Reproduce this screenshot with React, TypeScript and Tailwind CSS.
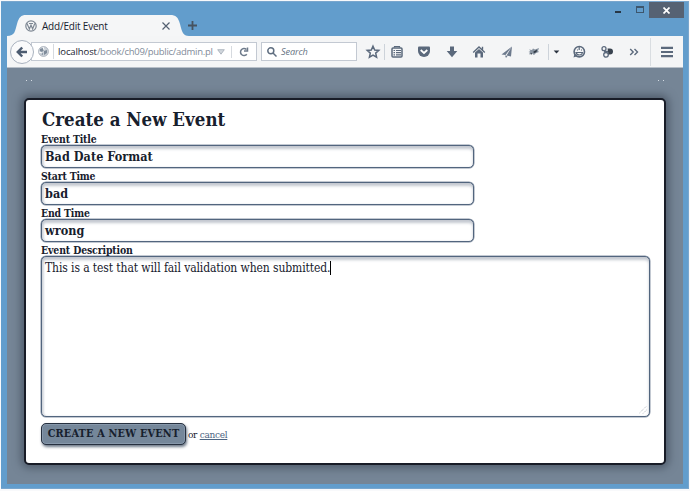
import React from "react";

const serif = "font-['DejaVu_Serif_Condensed','DejaVu_Serif',serif] [font-stretch:condensed]";
const inset = "rounded-[5px] border border-[#52657e] bg-white shadow-[inset_0_3px_3px_#c3c8d0,inset_2px_0_2px_#dde0e6,0_0_0_0.5px_#8794a5]";

function Glyph({ w, className = "", children }: { w: string; className?: string; children: React.ReactNode }) {
  return (
    <div className={`flex h-full shrink-0 items-center justify-center ${w} ${className}`}>
      <svg width="16" height="16" viewBox="0 0 16 16" fill="none" stroke="#5b697c" strokeWidth="1.6">
        {children}
      </svg>
    </div>
  );
}

function Divider() {
  return <div className="h-4 w-px shrink-0 bg-[#cdd3da]" />;
}

function Globe() {
  return (
    <svg width="11" height="11" viewBox="0 0 11 11" className="shrink-0">
      <circle cx="5.5" cy="5.5" r="5" fill="#cbd1d8" stroke="#a0a9b4" strokeWidth=".7" />
      <path d="M2 3l3-1 1 2-2 2-2-1zM6 5l3-1 0 3-3 2zM3 8l2-1 0 2z" fill="#7e8b9a" />
      <path d="M5 1l1 3M1 6l3 1" stroke="#fff" strokeWidth=".9" />
    </svg>
  );
}

function TabStrip() {
  return (
    <div className="flex h-[21px] items-end">
      <div className="relative h-[21px] w-[182px] shrink-0">
        <svg className="absolute inset-0" width="182" height="21" viewBox="0 0 182 21">
          <path d="M0 21C8 21 8 16 10 9C12 2 14 0 19 0H163C169 0 171 2 173 9C175 17 176 21 182 21Z" fill="#f5f6f7" />
        </svg>
        <div className="relative flex h-[21px] items-center pl-[18px]">
          <svg width="12" height="12" viewBox="0 0 12 12" fill="none" stroke="#7d8793">
            <circle cx="6" cy="6" r="5.2" strokeWidth="1.2" />
            <path d="M2 3.5L4.4 9L6 5L7.6 9L9.8 3.5M4 3.5h4" strokeWidth="1.2" />
          </svg>
          <span className="ml-[5px] w-[120px] font-['Open_Sans',sans-serif] text-[10px] leading-[20px] tracking-[-0.200px] text-[#18222f]">Add/Edit Event</span>
          <svg width="8" height="8" viewBox="0 0 8 8" stroke="#536071" strokeWidth="1.2"><path d="M.5.5l7 7M7.500.5l-7 7" /></svg>
        </div>
      </div>
      <svg className="-ml-px mb-[6px]" width="9" height="9" viewBox="0 0 9 9" stroke="#46535f" strokeWidth="1.800"><path d="M4.500 0v9M0 4.500h9" /></svg>
    </div>
  );
}

function Toolbar() {
  return (
    <div className="ml-[7px] flex h-[32px] w-[676px] items-center border-b border-[#b7bfc8] bg-[#f4f5f6]">
      <div className="z-10 ml-[3px] flex size-[24px] shrink-0 items-center justify-center rounded-full border border-[#a9b2bf] bg-[#fafafb]">
        <svg width="12" height="12" viewBox="0 0 12 12" fill="none" stroke="#4c5b70" strokeWidth="2.500"><path d="M11 6H2.500M6.200 1.500L1.800 6l4.400 4.500" /></svg>
      </div>
      <div className="-ml-[3px] flex h-[19px] w-[226px] shrink-0 items-center border border-[#c3c9d2] bg-white pl-[6px]">
        <Globe />
        <div className="ml-[4px] h-[15px] w-px shrink-0 bg-[#d6dadf]" />
        <span className="ml-[4px] w-[157px] shrink-0 whitespace-nowrap font-['Open_Sans',sans-serif] text-[9.500px] leading-[17px] tracking-[-0.280px] text-[#7f8b99]">
          <span className="tracking-[-0.100px] text-[#18222f]">localhost</span>/book/ch09/public/admin.pl
        </span>
        <svg className="ml-[2px] shrink-0" width="8" height="6" viewBox="0 0 8 6"><path d="M.7.700h6.600L4 5.200z" fill="#d2d7dd" stroke="#a2abb5" strokeWidth=".8" /></svg>
        <div className="ml-[6px] h-[12px] w-px shrink-0 bg-[#d6dadf]" />
        <svg className="ml-[7px] shrink-0" width="10" height="10" viewBox="0 0 10 10" fill="none" stroke="#6d7a8a" strokeWidth="1.500"><path d="M7.800 7.200A3.500 3.500 0 1 1 7.400 2.500M8.500.500v3.500H5" /></svg>
      </div>
      <div className="ml-[4px] flex h-[19px] w-[96px] shrink-0 items-center border border-[#c3c9d2] bg-white pl-[5px]">
        <svg width="10" height="10" viewBox="0 0 10 10" fill="none" stroke="#5f6e80" strokeWidth="1.500"><circle cx="3.800" cy="3.800" r="3" /><path d="M6 6l3.500 3.500" /></svg>
        <span className="ml-[4px] font-['Open_Sans',sans-serif] text-[9.200px] italic tracking-[-0.150px] text-[#667383]">Search</span>
      </div>
      <Glyph w="w-[23px]" className="ml-[4px]"><path d="M8 2.200l1.700 3.800 4.100.4-3.100 2.700.9 4.100L8 11.100l-3.600 2.100.9-4.100-3.100-2.700 4.100-.4z" strokeWidth="1.500" /></Glyph>
      <Divider />
      <Glyph w="w-[23px]"><rect x="3" y="4" width="10" height="9" rx="1" strokeWidth="1.500" /><path d="M5.500 3.500V2.500h5v1M4.500 6.500h1.500M7 6.500h5M4.500 8.700h1.500M7 8.700h5M4.500 10.900h1.500M7 10.900h5" strokeWidth="1.200" /></Glyph>
      <Glyph w="w-[32px]"><path d="M2 3.500Q2 2.500 3 2.500h10q1 0 1 1V7a6 6 0 0 1-12 0z" fill="#5b697c" stroke="none" /><path d="M4.700 6L8 9l3.300-3" stroke="#fff" strokeWidth="1.700" /></Glyph>
      <Glyph w="w-[24px]"><path d="M6 2.500h4v4.500h3.300L8 13.200 2.700 7H6z" fill="#5b697c" stroke="none" /></Glyph>
      <Glyph w="w-[30px]"><path d="M2.200 8.500L8 3l5.800 5.500M11.500 2.800v3" strokeWidth="1.400" /><path d="M4 8.500L8 5l4 3.500v5H9.500V9.500h-3v4H4z" fill="#5b697c" stroke="none" /></Glyph>
      <Glyph w="w-[25px]"><path d="M13 2.500L2.500 10.500l4 .5zM13 2.500L7.500 11.500l4.500 1zM6 11.500L7 14l1.500-2z" fill="#6d7a8d" stroke="none" /></Glyph>
      <Glyph w="w-[29px]"><path d="M3 5.500l3 .5 1-1.500 2 1 4-1.500-1 3 1 1-3 1-2 2-2-1.500-3 1 1-2-1.500-.5 2-1z" fill="#8994a1" stroke="none" /><path d="M7 8l4-2.500-.5 2.500-2 1zM4 10l2-1v1.500z" fill="#2c3641" stroke="none" /></Glyph>
      <Divider />
      <Glyph w="w-[15px]"><path d="M5 6.500h6L8 9.500z" fill="#29323e" stroke="none" /></Glyph>
      <Glyph w="w-[30px]"><circle cx="8.300" cy="7.700" r="5.200" strokeWidth="1.600" /><path d="M3.500 9.500L2.500 13.500l3.500-1.300z" fill="#5b697c" stroke="none" /><path d="M5 8.500h6.500Q11 11 8.300 11T5 8.500zM8.200 3v3M6 6h1M10 6h1" strokeWidth="1.200" /></Glyph>
      <Glyph w="w-[25px]"><circle cx="5" cy="4.700" r="2" strokeWidth="1.300" /><circle cx="7" cy="10.800" r="2.300" strokeWidth="1.300" /><path d="M5 7.500h4" strokeWidth="1.400" /><path d="M8.500 4.500h2.500a2.800 2.800 0 0 1 0 6H9.500z" fill="#39434f" stroke="none" /></Glyph>
      <Glyph w="w-[30px]"><path d="M4.200 5L7.200 8l-3 3M8.500 5L11.500 8l-3 3" strokeWidth="1.400" /></Glyph>
      <div className="ml-px h-[28px] w-px shrink-0 bg-[#d9dde1]" />
      <Glyph w="w-[32px]"><path d="M2 3.800h12M2 8h12M2 12.200h12" strokeWidth="2.200" /></Glyph>
    </div>
  );
}

function Field({ label, value }: { label: string; value: string }) {
  return (
    <div className="h-[37px]">
      <div className="h-[12px] whitespace-nowrap text-[10.400px] font-bold leading-[13px] tracking-[-0.160px]">{label}</div>
      <div className={`h-[23px] w-[433px] pl-[3px] text-[12.500px] font-bold leading-[21px] tracking-[0.050px] ${inset}`}>{value}</div>
    </div>
  );
}

export default function App() {
  return (
    <div className="h-[491px] w-[690px] overflow-hidden bg-[#f8f9fb] p-px">
      <div className="h-[488px] w-[688px] border-y border-r border-[#79a6cd] bg-[#629dcc]">
        <div className="-ml-px flex h-[13px] justify-end pr-[4px]">
          <div className="mr-[15px] mt-[9px] h-[2px] w-[6px] bg-[#273746]" />
          <div className="mr-[5px] mt-[4px] h-[7px] w-[8px] border border-t-2 border-[#3d566d]" />
          <div className="flex h-[16px] w-[35px] items-center justify-center bg-[#566273]">
            <svg width="7" height="7" viewBox="0 0 7 7" stroke="#fff" strokeWidth="1.700"><path d="M.500.500l6 6M6.500.500l-6 6" /></svg>
          </div>
        </div>
        <div className="-ml-px">
          <div className="pl-[7px]"><TabStrip /></div>
          <Toolbar />
          <main className={`ml-[7px] h-[416px] w-[676px] bg-[#758596] text-[#17202d] ${serif}`}>
            <div className="flex h-[30px] justify-between px-[19px] pt-[12px] text-[#d5dce4]">
              <span className="flex gap-[4px]"><i className="size-px bg-current" /><i className="size-px bg-current" /></span>
              <span className="flex gap-[4px]"><i className="size-px bg-current" /><i className="size-px bg-current" /></span>
            </div>
            <section className="ml-[17px] h-[367px] w-[642px] rounded-[5px] border-2 border-[#181c27] bg-white pl-[15px] shadow-[0_0_8px_3px_#505c6b]">
              <h1 className="h-[33px] whitespace-nowrap pl-px pt-[8px] text-[18.500px] font-bold leading-[24px] tracking-[0.030px]">Create a New Event</h1>
              <Field label="Event Title" value="Bad Date Format" />
              <Field label="Start Time" value="bad" />
              <Field label="End Time" value="wrong" />
              <div className="h-[12px] whitespace-nowrap text-[10.400px] font-bold leading-[13px] tracking-[-0.120px]">Event Description</div>
              <div className={`flex h-[161px] w-[609px] justify-between pl-[3px] ${inset}`}>
                <div className="flex h-[21px] items-center whitespace-nowrap text-[12px] tracking-[-0.100px]">
                  <span>This is a test that will fail validation when submitted.</span>
                  <i className="h-[14px] w-px bg-black" />
                </div>
                <svg className="mb-[2px] mr-[2px] self-end" width="8" height="8" viewBox="0 0 8 8" stroke="#a9b0ba" strokeWidth="1" strokeDasharray="1 1"><path d="M7.500 0L0 7.500M7.500 4L4 7.500" /></svg>
              </div>
              <div className="mt-[6px] flex items-center">
                <div className="flex h-[22px] w-[145px] items-center justify-center whitespace-nowrap rounded-[5px] border border-[#26303f] bg-[#75879a] text-[10.800px] font-bold tracking-[0.200px] shadow-[inset_0_0_0_1px_#8798ab,1px_2px_3px_#6d7988]">CREATE A NEW EVENT</div>
                <span className="ml-[2px] whitespace-nowrap text-[10px] tracking-[-0.300px]">or <span className="text-[#4c6582] underline">cancel</span></span>
              </div>
            </section>
          </main>
        </div>
      </div>
    </div>
  );
}
